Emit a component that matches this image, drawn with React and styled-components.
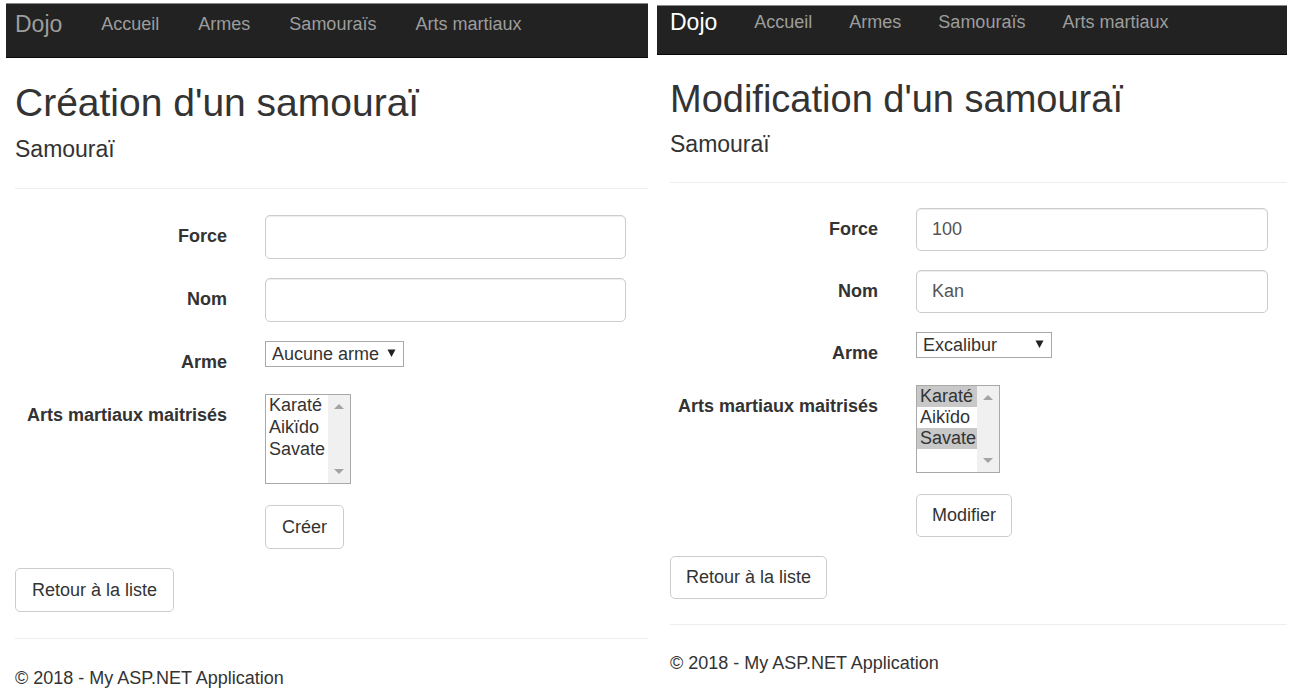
import React, { useId, useState } from "react";
import styled, { createGlobalStyle, ThemeProvider } from "styled-components";

const GlobalStyle = createGlobalStyle`
  *, *::before, *::after { box-sizing: border-box; }
  body {
    margin: 0;
    background: #fff;
    color: #333;
    font: 18px/26px "Liberation Sans", Arial, Helvetica, sans-serif;
  }
`;

const largeTheme = {
  navTop: 3,
  navHeight: 55,
  navPad: 7,
  navInset: 9,
  linkGap: 39,
  brand: "#9d9d9d",
  title: 39,
  titleLine: 44,
  titleGap: 11,
  ruleGap: 26,
  ruleBelow: 26,
  control: 44,
  rowGap: 19,
  labelPad: 9,
  labelColumn: 212,
  fieldInset: 22,
  weapon: 139,
  listWidth: 86,
  listHeight: 90,
  option: 22,
  buttonPad: 16,
};

const smallTheme = {
  navTop: 5,
  navHeight: 50,
  navPad: 3,
  navInset: 13,
  linkGap: 37,
  brand: "#fff",
  title: 38,
  titleLine: 42,
  titleGap: 11,
  ruleGap: 25,
  ruleBelow: 25,
  control: 43,
  rowGap: 19,
  labelPad: 9,
  labelColumn: 208,
  fieldInset: 19,
  weapon: 136,
  listWidth: 84,
  listHeight: 88,
  option: 21,
  buttonPad: 15,
};

const Page = styled.div`
  display: grid;
  grid-template-columns: minmax(0, 642fr) minmax(0, 630fr);
  gap: 9px;
  padding: 0 6px;
`;

const Panel = styled.section`
  padding-top: ${({ theme }) => theme.navTop}px;
`;

const NavBar = styled.nav`
  display: flex;
  align-items: flex-start;
  gap: ${({ theme }) => theme.linkGap}px;
  height: ${({ theme }) => theme.navHeight}px;
  padding: ${({ theme }) => `${theme.navPad}px ${theme.navInset}px 0`};
  background: #222;
  border-top: 1px solid #888;
  border-bottom: 1px solid #080808;
  white-space: nowrap;
`;

const NavLink = styled.a`
  color: #9d9d9d;
  text-decoration: none;
`;

const Brand = styled(NavLink)`
  color: ${({ theme }) => theme.brand};
  font-size: 23px;
`;

const Content = styled.main`
  padding: 23px 0 0 ${({ theme }) => theme.navInset}px;
`;

const Title = styled.h2`
  margin: 0;
  font-size: ${({ theme }) => theme.title}px;
  line-height: ${({ theme }) => theme.titleLine}px;
  font-weight: 400;
`;

const Subtitle = styled.h4`
  margin: ${({ theme }) => theme.titleGap}px 0 0;
  font-size: 23px;
  font-weight: 400;
`;

const Rule = styled.hr`
  margin: ${({ theme }) => `${theme.ruleGap}px 0 ${theme.ruleBelow}px`};
  border: 0;
  border-top: 1px solid #eee;
`;

const Form = styled.form`
  display: flex;
  flex-direction: column;
  gap: ${({ theme }) => theme.rowGap}px;
`;

const Row = styled.div`
  display: grid;
  grid-template-columns: ${({ theme }) => theme.labelColumn}px minmax(0, 1fr);
  column-gap: 38px;
  align-items: start;
  padding-right: ${({ theme }) => theme.fieldInset}px;
`;

const Label = styled.label`
  padding-top: ${({ theme }) => theme.labelPad}px;
  font-weight: 700;
  line-height: 25px;
  text-align: right;
  white-space: nowrap;
`;

const TextInput = styled.input`
  width: 100%;
  height: ${({ theme }) => theme.control}px;
  padding: 0 15px;
  border: 1px solid #ccc;
  border-radius: 5px;
  box-shadow: inset 0 1px 1px rgba(0, 0, 0, 0.075);
  background: #fff;
  color: #555;
  font: inherit;
`;

const SelectBox = styled.div`
  position: relative;
  width: ${({ theme }) => theme.weapon}px;
  height: 26px;
`;

const Select = styled.select`
  display: block;
  width: 100%;
  height: 26px;
  padding: 0 20px 0 6px;
  appearance: none;
  border: 1px solid #a9a9a9;
  border-radius: 0;
  background: #fff;
  color: #333;
  font: inherit;
  line-height: 22px;
`;

const SelectArrow = styled.svg`
  position: absolute;
  right: 8px;
  top: 8px;
  pointer-events: none;
`;

const ListFrame = styled.div`
  display: flex;
  width: ${({ theme }) => theme.listWidth}px;
  height: ${({ theme }) => theme.listHeight}px;
  margin-bottom: 2px;
  border: 1px solid #a9a9a9;
`;

const ListSelect = styled.select`
  flex: 1;
  min-width: 0;
  height: 100%;
  padding: 0;
  border: 0;
  border-radius: 0;
  outline: 0;
  overflow: hidden;
  scrollbar-width: none;
  background: #fff;
  color: #333;
  font: inherit;
`;

const ListOption = styled.option`
  height: ${({ theme }) => theme.option}px;
  min-height: 0;
  padding: 0 3px;
  line-height: ${({ theme }) => theme.option}px;
  color: #333;

  &:checked {
    background: #c8c8c8 linear-gradient(#c8c8c8, #c8c8c8);
    color: #333;
  }
`;

const ScrollTrack = styled.div`
  display: flex;
  flex-direction: column;
  justify-content: space-between;
  align-items: center;
  width: 22px;
  padding: 9px 0;
  background: #f0f0f0;
`;

const buttonStyle = ({ theme }) => `
  display: inline-block;
  justify-self: start;
  height: ${theme.control}px;
  padding: 0 ${theme.buttonPad}px;
  border: 1px solid #ccc;
  border-radius: 5px;
  background: #fff;
  color: #333;
  font: inherit;
  line-height: ${theme.control - 2}px;
  text-decoration: none;
  white-space: nowrap;
  cursor: pointer;
`;

const Button = styled.button`
  ${buttonStyle}
  grid-column: 2;
`;

const BackRow = styled.div`
  display: flex;
  margin-top: ${({ theme }) => theme.rowGap}px;
`;

const BackLink = styled.a`
  ${buttonStyle}
`;

const Footer = styled.footer`
  white-space: nowrap;
`;

const LINKS = ["Accueil", "Armes", "Samouraïs", "Arts martiaux"];
const ARTS = ["Karaté", "Aikïdo", "Savate"];
const WEAPONS = ["Aucune arme", "Excalibur"];

function SamuraiPanel({ theme, title, action, initial }) {
  const id = useId();
  const [values, setValues] = useState(initial);
  const update = (key) => (e) => setValues({ ...values, [key]: e.target.value });
  const updateArts = (e) =>
    setValues({ ...values, arts: Array.from(e.target.selectedOptions, (o) => o.value) });

  return (
    <ThemeProvider theme={theme}>
      <Panel>
        <NavBar>
          <Brand href="#">Dojo</Brand>
          {LINKS.map((link) => (
            <NavLink key={link} href="#">{link}</NavLink>
          ))}
        </NavBar>
        <Content>
          <Title>{title}</Title>
          <Subtitle>Samouraï</Subtitle>
          <Rule />
          <Form onSubmit={(e) => e.preventDefault()}>
            <Row>
              <Label htmlFor={`${id}force`}>Force</Label>
              <TextInput id={`${id}force`} value={values.force} onChange={update("force")} />
            </Row>
            <Row>
              <Label htmlFor={`${id}nom`}>Nom</Label>
              <TextInput id={`${id}nom`} value={values.nom} onChange={update("nom")} />
            </Row>
            <Row>
              <Label htmlFor={`${id}arme`}>Arme</Label>
              <SelectBox>
                <Select id={`${id}arme`} value={values.arme} onChange={update("arme")}>
                  {WEAPONS.map((w) => <option key={w}>{w}</option>)}
                </Select>
                <SelectArrow width="9" height="8" viewBox="0 0 9 8" aria-hidden="true">
                  <path d="M0.5 0.5h8L4.5 8z" fill="#222" />
                </SelectArrow>
              </SelectBox>
            </Row>
            <Row>
              <Label htmlFor={`${id}arts`}>Arts martiaux maitrisés</Label>
              <ListFrame>
                <ListSelect id={`${id}arts`} multiple size={4} value={values.arts} onChange={updateArts}>
                  {ARTS.map((a) => <ListOption key={a}>{a}</ListOption>)}
                </ListSelect>
                <ScrollTrack aria-hidden="true">
                  <svg width="10" height="5" viewBox="0 0 10 5"><path d="M0 5h10L5 0z" fill="#a3a3a3" /></svg>
                  <svg width="10" height="5" viewBox="0 0 10 5"><path d="M0 0h10L5 5z" fill="#a3a3a3" /></svg>
                </ScrollTrack>
              </ListFrame>
            </Row>
            <Row>
              <Button type="submit">{action}</Button>
            </Row>
          </Form>
          <BackRow>
            <BackLink href="#">Retour à la liste</BackLink>
          </BackRow>
          <Rule />
          <Footer>© 2018 - My ASP.NET Application</Footer>
        </Content>
      </Panel>
    </ThemeProvider>
  );
}

export default function App() {
  return (
    <>
      <GlobalStyle />
      <Page>
        <SamuraiPanel
          theme={largeTheme}
          title="Création d'un samouraï"
          action="Créer"
          initial={{ force: "", nom: "", arme: "Aucune arme", arts: [] }}
        />
        <SamuraiPanel
          theme={smallTheme}
          title="Modification d'un samouraï"
          action="Modifier"
          initial={{ force: "100", nom: "Kan", arme: "Excalibur", arts: ["Karaté", "Savate"] }}
        />
      </Page>
    </>
  );
}
